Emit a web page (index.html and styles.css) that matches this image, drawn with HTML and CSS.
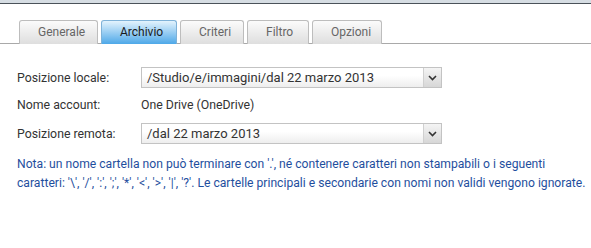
FILE: index.html
```html
<!DOCTYPE html>
<html lang="it">
<head>
    <meta charset="UTF-8">
    <title>Archivio</title>
    <link rel="stylesheet" href="styles.css">
</head>
<body>
<div class="topbar"></div>

<div class="tabs">
    <div class="tab">Generale</div>
    <div class="tab active">Archivio</div>
    <div class="tab">Criteri</div>
    <div class="tab">Filtro</div>
    <div class="tab">Opzioni</div>
</div>

<div class="form">
    <div class="row">
        <label class="label">Posizione locale:</label>
        <div class="select">
            <span class="value">/Studio/e/immagini/dal 22 marzo 2013</span>
            <span class="arrow">
                <svg width="9" height="6" viewBox="0 0 9 6"><path d="M1 1 L4.5 4.5 L8 1" fill="none" stroke="#333" stroke-width="1.6"/></svg>
            </span>
        </div>
    </div>
    <div class="row text-row">
        <label class="label">Nome account:</label>
        <span class="plain">One Drive (OneDrive)</span>
    </div>
    <div class="row">
        <label class="label">Posizione remota:</label>
        <div class="select">
            <span class="value">/dal 22 marzo 2013</span>
            <span class="arrow">
                <svg width="9" height="6" viewBox="0 0 9 6"><path d="M1 1 L4.5 4.5 L8 1" fill="none" stroke="#333" stroke-width="1.6"/></svg>
            </span>
        </div>
    </div>
</div>

<div class="note">
    <div>Nota: un nome cartella non può terminare con '.', né contenere caratteri non stampabili o i seguenti</div>
    <div>caratteri: '\', '/', ':', ';', '*', '&lt;', '&gt;', '|', '?'. Le cartelle principali e secondarie con nomi non validi vengono ignorate.</div>
</div>
</body>
</html>
```

FILE: styles.css
```css
body {
    margin: 0;
    font-family: Roboto, "Liberation Sans", sans-serif;
    font-size: 12px;
    color: #333;
    background: #fff;
}

.topbar {
    height: 3px;
    background: #d6dde3;
    border-bottom: 1px solid #4a5259;
}

.tabs {
    display: flex;
    gap: 3px;
    margin-top: 16px;
    padding-left: 19px;
    border-bottom: 1px solid #a9a9a9;
    height: 23px;
}

.tab {
    box-sizing: border-box;
    height: 24px;
    padding: 0 18px;
    line-height: 22px;
    color: #666;
    border: 1px solid #bdbdbd;
    border-bottom: none;
    border-radius: 3px 3px 0 0;
    background: linear-gradient(#fbfbfb, #dedede);
    text-align: center;
}

.tab:nth-child(1) { width: 79px; }
.tab:nth-child(2) { width: 76px; }
.tab:nth-child(3) { width: 64px; }
.tab:nth-child(4) { width: 62px; }
.tab:nth-child(5) { width: 70px; }

.tab.active {
    color: #1a1a1a;
    border-color: #7fb2d8;
    background: linear-gradient(#e3f3fd, #4ea8e8);
}

.form {
    padding: 23px 0 0 17px;
}

.row {
    display: flex;
    align-items: center;
    height: 21px;
    margin-bottom: 7px;
}

.text-row {
    height: 19px;
    margin-bottom: 9px;
}

.label {
    width: 124px;
    font-size: 12.3px;
}

.select {
    box-sizing: border-box;
    display: flex;
    width: 301px;
    height: 21px;
    border: 1px solid #c3c3c3;
    background: linear-gradient(#fff 40%, #eee);
}

.value {
    flex: 1;
    padding-left: 5px;
    line-height: 19px;
    font-size: 13px;
    color: #333;
}

.arrow {
    width: 17px;
    display: flex;
    align-items: center;
    justify-content: center;
    border-left: 1px solid #d0d0d0;
    background: linear-gradient(#f4f4f4, #d7d7d7);
}

.plain {
    font-size: 12.3px;
}

.note {
    margin: 11px 0 0 17px;
    color: #1f4f9e;
    line-height: 19px;
    font-size: 12.15px;
    white-space: nowrap;
}
```
